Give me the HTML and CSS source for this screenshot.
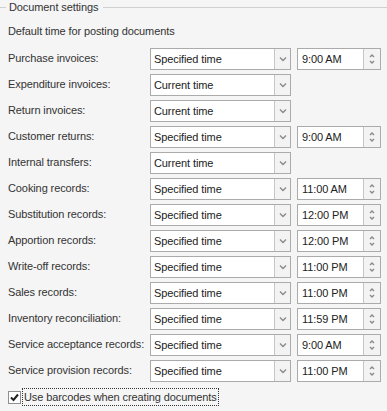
FILE: index.html
```html
<!DOCTYPE html>
<html>
<head>
  <title>Document settings</title>
  <link rel="stylesheet" href="styles.css">
</head>
<body>
  <div class="group">
    <div class="group-title">
      <span class="line short"></span>
      <span class="title">Document settings</span>
      <span class="line"></span>
    </div>
    <div class="group-body">
      <div class="caption">Default time for posting documents</div>

      <div class="rows">
        <div class="label">Purchase invoices:</div>
        <div class="combo"><span>Specified time</span><i class="drop"><svg viewBox="0 0 8 6"><path d="M1 1.5 L4 4.5 L7 1.5"/></svg></i></div>
        <div class="time"><span>9:00 AM</span><i class="spin"><svg viewBox="0 0 6 4"><path d="M1 3 L3 1 L5 3"/></svg><svg viewBox="0 0 6 4"><path d="M1 1 L3 3 L5 1"/></svg></i></div>

        <div class="label">Expenditure invoices:</div>
        <div class="combo"><span>Current time</span><i class="drop"><svg viewBox="0 0 8 6"><path d="M1 1.5 L4 4.5 L7 1.5"/></svg></i></div>
        <div></div>

        <div class="label">Return invoices:</div>
        <div class="combo"><span>Current time</span><i class="drop"><svg viewBox="0 0 8 6"><path d="M1 1.5 L4 4.5 L7 1.5"/></svg></i></div>
        <div></div>

        <div class="label">Customer returns:</div>
        <div class="combo"><span>Specified time</span><i class="drop"><svg viewBox="0 0 8 6"><path d="M1 1.5 L4 4.5 L7 1.5"/></svg></i></div>
        <div class="time"><span>9:00 AM</span><i class="spin"><svg viewBox="0 0 6 4"><path d="M1 3 L3 1 L5 3"/></svg><svg viewBox="0 0 6 4"><path d="M1 1 L3 3 L5 1"/></svg></i></div>

        <div class="label">Internal transfers:</div>
        <div class="combo"><span>Current time</span><i class="drop"><svg viewBox="0 0 8 6"><path d="M1 1.5 L4 4.5 L7 1.5"/></svg></i></div>
        <div></div>

        <div class="label">Cooking records:</div>
        <div class="combo"><span>Specified time</span><i class="drop"><svg viewBox="0 0 8 6"><path d="M1 1.5 L4 4.5 L7 1.5"/></svg></i></div>
        <div class="time"><span>11:00 AM</span><i class="spin"><svg viewBox="0 0 6 4"><path d="M1 3 L3 1 L5 3"/></svg><svg viewBox="0 0 6 4"><path d="M1 1 L3 3 L5 1"/></svg></i></div>

        <div class="label">Substitution records:</div>
        <div class="combo"><span>Specified time</span><i class="drop"><svg viewBox="0 0 8 6"><path d="M1 1.5 L4 4.5 L7 1.5"/></svg></i></div>
        <div class="time"><span>12:00 PM</span><i class="spin"><svg viewBox="0 0 6 4"><path d="M1 3 L3 1 L5 3"/></svg><svg viewBox="0 0 6 4"><path d="M1 1 L3 3 L5 1"/></svg></i></div>

        <div class="label">Apportion records:</div>
        <div class="combo"><span>Specified time</span><i class="drop"><svg viewBox="0 0 8 6"><path d="M1 1.5 L4 4.5 L7 1.5"/></svg></i></div>
        <div class="time"><span>12:00 PM</span><i class="spin"><svg viewBox="0 0 6 4"><path d="M1 3 L3 1 L5 3"/></svg><svg viewBox="0 0 6 4"><path d="M1 1 L3 3 L5 1"/></svg></i></div>

        <div class="label">Write-off records:</div>
        <div class="combo"><span>Specified time</span><i class="drop"><svg viewBox="0 0 8 6"><path d="M1 1.5 L4 4.5 L7 1.5"/></svg></i></div>
        <div class="time"><span>11:00 PM</span><i class="spin"><svg viewBox="0 0 6 4"><path d="M1 3 L3 1 L5 3"/></svg><svg viewBox="0 0 6 4"><path d="M1 1 L3 3 L5 1"/></svg></i></div>

        <div class="label">Sales records:</div>
        <div class="combo"><span>Specified time</span><i class="drop"><svg viewBox="0 0 8 6"><path d="M1 1.5 L4 4.5 L7 1.5"/></svg></i></div>
        <div class="time"><span>11:00 PM</span><i class="spin"><svg viewBox="0 0 6 4"><path d="M1 3 L3 1 L5 3"/></svg><svg viewBox="0 0 6 4"><path d="M1 1 L3 3 L5 1"/></svg></i></div>

        <div class="label">Inventory reconciliation:</div>
        <div class="combo"><span>Specified time</span><i class="drop"><svg viewBox="0 0 8 6"><path d="M1 1.5 L4 4.5 L7 1.5"/></svg></i></div>
        <div class="time"><span>11:59 PM</span><i class="spin"><svg viewBox="0 0 6 4"><path d="M1 3 L3 1 L5 3"/></svg><svg viewBox="0 0 6 4"><path d="M1 1 L3 3 L5 1"/></svg></i></div>

        <div class="label">Service acceptance records:</div>
        <div class="combo"><span>Specified time</span><i class="drop"><svg viewBox="0 0 8 6"><path d="M1 1.5 L4 4.5 L7 1.5"/></svg></i></div>
        <div class="time"><span>9:00 AM</span><i class="spin"><svg viewBox="0 0 6 4"><path d="M1 3 L3 1 L5 3"/></svg><svg viewBox="0 0 6 4"><path d="M1 1 L3 3 L5 1"/></svg></i></div>

        <div class="label">Service provision records:</div>
        <div class="combo"><span>Specified time</span><i class="drop"><svg viewBox="0 0 8 6"><path d="M1 1.5 L4 4.5 L7 1.5"/></svg></i></div>
        <div class="time"><span>11:00 PM</span><i class="spin"><svg viewBox="0 0 6 4"><path d="M1 3 L3 1 L5 3"/></svg><svg viewBox="0 0 6 4"><path d="M1 1 L3 3 L5 1"/></svg></i></div>
      </div>

      <div class="check-row">
        <span class="checkbox"><svg viewBox="0 0 11 11"><path d="M2 5.5 L4.5 8 L9 2.5"/></svg></span>
        <span class="check-label">Use barcodes when creating documents</span>
      </div>
    </div>
  </div>
</body>
</html>
```

FILE: styles.css
```css
* {
  margin: 0;
  padding: 0;
  box-sizing: border-box;
}

body {
  width: 387px;
  height: 411px;
  background: #f5f5f5;
  color: #333;
  font-family: "Liberation Sans", Arial, sans-serif;
  font-size: 11px;
  letter-spacing: -0.1px;
  overflow: hidden;
}

.group-title {
  display: flex;
  align-items: center;
  height: 14px;
}

.group-title .line {
  flex: 1;
  border-top: 1px solid #d0d0d0;
}

.group-title .line.short {
  flex: 0 0 6px;
}

.group-title .title {
  padding: 0 5px 0 3px;
  line-height: 14px;
}

.group-body {
  padding-left: 8px;
}

.caption {
  margin-top: 9px;
  height: 16px;
  line-height: 16px;
}

.rows {
  display: grid;
  grid-template-columns: 136px 141px 84px;
  grid-auto-rows: 22px;
  column-gap: 6px;
  row-gap: 4px;
  margin-top: 9px;
}

.label {
  line-height: 20px;
  white-space: nowrap;
}

.combo, .time {
  display: flex;
  border: 1px solid #ababab;
  background: #fff;
  color: #222;
}

.combo span, .time span {
  flex: 1;
  padding-left: 3px;
  line-height: 20px;
  white-space: nowrap;
  overflow: hidden;
}

.time span {
  padding-left: 4px;
}

.drop {
  width: 16px;
  border-left: 1px solid #c6c6c6;
  background: #f3f3f3;
  display: flex;
  align-items: center;
  justify-content: center;
}

.drop svg {
  width: 8px;
  height: 6px;
}

.drop path, .spin path {
  fill: none;
  stroke: #8a8a8a;
  stroke-width: 1.4;
}

.spin {
  width: 17px;
  border-left: 1px solid #c6c6c6;
  background: #f3f3f3;
  display: flex;
  flex-direction: column;
  align-items: center;
  justify-content: center;
  gap: 2px;
}

.spin svg {
  width: 6px;
  height: 4px;
}

.check-row {
  display: flex;
  align-items: center;
  margin-top: 6px;
  height: 18px;
}

.checkbox {
  width: 13px;
  height: 13px;
  border: 1px solid #8e8f8f;
  background: #fff;
  display: flex;
  align-items: center;
  justify-content: center;
}

.checkbox svg {
  width: 11px;
  height: 11px;
}

.checkbox path {
  fill: none;
  stroke: #222;
  stroke-width: 2;
}

.check-label {
  margin-left: 1px;
  padding: 0 1px;
  line-height: 16px;
  border: 1px dotted #333;
}
```
